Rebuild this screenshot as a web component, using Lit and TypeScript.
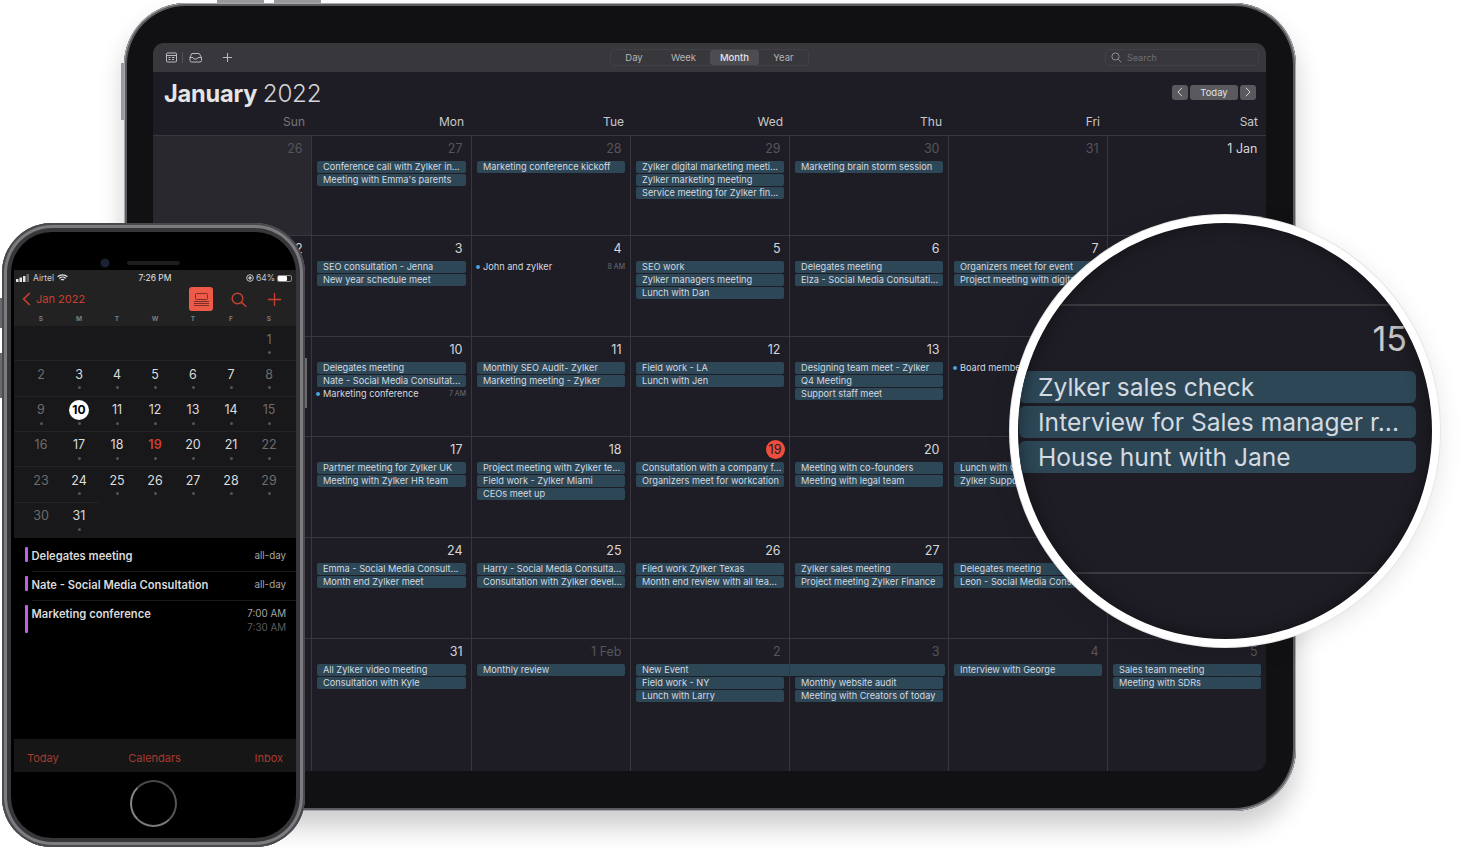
import { LitElement, html, css, svg } from 'lit';
import { customElement } from 'lit/decorators.js';

type Ev = string | { dot: string; time?: string } | { span: string } | { gap: true };
type Cell = { d: string; dim?: boolean; shade?: boolean; today?: boolean; ev?: Ev[] };

// dates that sit fully under the magnifier are left blank
const WEEK: Cell[][] = [
  [
    { d: '26', dim: true, shade: true },
    { d: '27', dim: true, ev: ['Conference call with Zylker in...', "Meeting with Emma's parents"] },
    { d: '28', dim: true, ev: ['Marketing conference kickoff'] },
    { d: '29', dim: true, ev: ['Zylker digital marketing meeti...', 'Zylker marketing meeting', 'Service meeting for Zylker fin...'] },
    { d: '30', dim: true, ev: ['Marketing brain storm session'] },
    { d: '31', dim: true },
    { d: '1 Jan' },
  ],
  [
    { d: '2' },
    { d: '3', ev: ['SEO consultation - Jenna', 'New year schedule meet'] },
    { d: '4', ev: [{ dot: 'John and zylker', time: '8 AM' }] },
    { d: '5', ev: ['SEO work', 'Zylker managers meeting', 'Lunch with Dan'] },
    { d: '6', ev: ['Delegates meeting', 'Elza - Social Media Consultati...'] },
    { d: '7', ev: ['Organizers meet for event', 'Project meeting with digital...'] },
    { d: '' },
  ],
  [
    { d: '9' },
    { d: '10', ev: ['Delegates meeting', 'Nate - Social Media Consultat...', { dot: 'Marketing conference', time: '7 AM' }] },
    { d: '11', ev: ['Monthly SEO Audit- Zylker', 'Marketing meeting - Zylker'] },
    { d: '12', ev: ['Field work - LA', 'Lunch with Jen'] },
    { d: '13', ev: ['Designing team meet - Zylker', 'Q4 Meeting', 'Support staff meet'] },
    { d: '', ev: [{ dot: 'Board members meeting' }] },
    { d: '' },
  ],
  [
    { d: '16' },
    { d: '17', ev: ['Partner meeting for Zylker UK', 'Meeting with Zylker HR team'] },
    { d: '18', ev: ['Project meeting with Zylker te...', 'Field work - Zylker Miami', 'CEOs meet up'] },
    { d: '19', today: true, ev: ['Consultation with a company f...', 'Organizers meet for workcation'] },
    { d: '20', ev: ['Meeting with co-founders', 'Meeting with legal team'] },
    { d: '', ev: ['Lunch with George', 'Zylker Support team'] },
    { d: '' },
  ],
  [
    { d: '23' },
    { d: '24', ev: ['Emma - Social Media Consult...', 'Month end Zylker meet'] },
    { d: '25', ev: ['Harry - Social Media Consulta...', 'Consultation with Zylker devel...'] },
    { d: '26', ev: ['Filed work Zylker Texas', 'Month end review with all tea...'] },
    { d: '27', ev: ['Zylker sales meeting', 'Project meeting Zylker Finance'] },
    { d: '', ev: ['Delegates meeting', 'Leon - Social Media Consult...'] },
    { d: '' },
  ],
  [
    { d: '30' },
    { d: '31', ev: ['All Zylker video meeting', 'Consultation with Kyle'] },
    { d: '1 Feb', dim: true, ev: ['Monthly review'] },
    { d: '2', dim: true, ev: [{ span: 'New Event' }, 'Field work - NY', 'Lunch with Larry'] },
    { d: '3', dim: true, ev: [{ gap: true }, 'Monthly website audit', 'Meeting with Creators of today'] },
    { d: '4', dim: true, ev: ['Interview with George'] },
    { d: '5', dim: true, ev: ['Sales team meeting', 'Meeting with SDRs'] },
  ],
];

const WEEKDAYS = ['Sun', 'Mon', 'Tue', 'Wed', 'Thu', 'Fri', 'Sat'];
const MINI_HEAD = ['S', 'M', 'T', 'W', 'T', 'F', 'S'];
// days without a dot under them in the phone month view
const NO_DOT = [2, 16, 23, 30];

const red = '#c8402f';

const icons = {
  calendar: svg`<svg width="11" height="11" viewBox="0 0 11 11" fill="none" stroke="#b9b9bc" stroke-width="1"><rect x=".5" y="1" width="10" height="9" rx="1"/><path d="M.5 3.5h10M2.5 5.5h2M6 5.5h2.5M2.5 7.5h2M6 7.5h2"/></svg>`,
  inbox: svg`<svg width="13" height="11" viewBox="0 0 13 11" fill="none" stroke="#b9b9bc" stroke-width="1"><path d="M2.8 1.5h7.4l2.3 4v3a1.5 1.5 0 0 1-1.5 1.5h-8.500a1.5 1.5 0 0 1-1.5-1.5v-3z"/><path d="M.7 5.5h3.3l1 1.5h3l1-1.5h3.3"/></svg>`,
  plus: svg`<svg width="9" height="9" viewBox="0 0 9 9" stroke="#b9b9bc" stroke-width="1"><path d="M4.5 0v9M0 4.5h9"/></svg>`,
  search: svg`<svg width="11" height="11" viewBox="0 0 11 11" fill="none" stroke="#8d8d91" stroke-width="1"><circle cx="4.5" cy="4.5" r="3.6"/><path d="M7.2 7.2l3.2 3.2"/></svg>`,
  prev: svg`<svg width="6" height="10" viewBox="0 0 6 10" fill="none" stroke="#d6d6d8" stroke-width="1"><path d="M5 .8L1 5l4 4.2"/></svg>`,
  next: svg`<svg width="6" height="10" viewBox="0 0 6 10" fill="none" stroke="#d6d6d8" stroke-width="1"><path d="M1 .8L5 5 1 9.2"/></svg>`,
  signal: svg`<svg width="14" height="8" viewBox="0 0 14 8"><rect x="0" y="5" width="2.5" height="3" fill="#e4e4e4"/><rect x="3.5" y="3.5" width="2.5" height="4.5" fill="#e4e4e4"/><rect x="7" y="2" width="2.5" height="6" fill="#e4e4e4"/><rect x="10.5" y="0" width="2.5" height="8" fill="#666"/></svg>`,
  wifi: svg`<svg width="11" height="8" viewBox="0 0 11 8" fill="none" stroke="#e4e4e4" stroke-width="1.2"><path d="M.6 2.8a7 7 0 0 1 9.8 0M2.3 4.5a4.6 4.6 0 0 1 6.4 0M3.9 6.1a2.3 2.3 0 0 1 3.2 0"/></svg>`,
  lock: svg`<svg width="8" height="8" viewBox="0 0 8 8" fill="none" stroke="#c4c4c4" stroke-width="1"><circle cx="4" cy="4" r="3.3"/><circle cx="4" cy="4" r="1.2" fill="#c4c4c4"/></svg>`,
  back: svg`<svg width="9" height="14" viewBox="0 0 9 14" fill="none" stroke="${red}" stroke-width="1.7"><path d="M7.8 1L1.6 7l6.2 6"/></svg>`,
  list: svg`<svg width="15" height="13" viewBox="0 0 15 13" fill="none" stroke="#7e3026" stroke-width="1"><rect x="1.5" y=".5" width="12" height="6" rx="1"/><path d="M0 8.5h15M0 10.5h15M0 12.5h15"/></svg>`,
  find: svg`<svg width="16" height="16" viewBox="0 0 16 16" fill="none" stroke="${red}" stroke-width="1.4"><circle cx="6.5" cy="6.5" r="5.3"/><path d="M10.4 10.4l5 4.4"/></svg>`,
  add: svg`<svg width="13" height="13" viewBox="0 0 13 13" stroke="${red}" stroke-width="1.3"><path d="M6.5 0v13M0 6.5h13"/></svg>`,
};

@customElement('app-root')
export class AppRoot extends LitElement {
  static styles = css`
    :host {
      display: block;
      position: relative;
      width: 1479px;
      height: 848px;
      overflow: hidden;
      background: #fff;
      font-family: Inter, "Liberation Sans", sans-serif;
    }

    /* tablet */
    .tablet {
      position: absolute;
      left: 124px;
      top: 3px;
      width: 1172px;
      height: 808px;
      box-sizing: border-box;
      padding: 40px 30px 40px 29px;
      border-radius: 62px;
      background: #111113;
      box-shadow: inset 0 0 0 1px #a8a8ac, inset 0 0 0 3px #5c5c60, 0 16px 26px rgba(0, 0, 0, .2);
    }
    .hw { position: absolute; background: #9a9a9e; }
    .hw.vol1 { left: 93px; top: -3px; width: 47px; height: 3px; }
    .hw.vol2 { left: 150px; top: -3px; width: 47px; height: 3px; }
    .hw.side { left: -3px; top: 60px; width: 3px; height: 57px; }
    .screen {
      display: flex;
      flex-direction: column;
      height: 728px;
      border-radius: 11px;
      overflow: hidden;
      background: #1e1d25;
    }
    .toolbar {
      display: flex;
      align-items: center;
      position: relative;
      flex: none;
      height: 29px;
      padding: 0 7px 0 13px;
      background: #38373c;
      color: #b4b4b7;
    }
    .toolbar .tool { display: flex; align-items: center; }
    .toolbar .sep { width: 1px; height: 11px; margin: 0 6px 0 5px; background: #515156; }
    .toolbar .plus { margin-left: 21px; }
    .segments {
      display: flex;
      align-items: center;
      margin-left: 378px;
      width: 199px;
      height: 17px;
      box-sizing: border-box;
      border: 1px solid #414146;
      border-radius: 4px;
      font-size: 9.5px;
    }
    .segments span { text-align: center; line-height: 15px; }
    .segments .on { background: #4d4c51; border-radius: 3px; color: #e2e2e4; font-weight: 500; }
    .searchbox {
      display: flex;
      align-items: center;
      gap: 5px;
      box-sizing: border-box;
      margin-left: auto;
      width: 154px;
      height: 17px;
      padding-left: 5px;
      border: 1px solid #414146;
      border-radius: 4px;
      font-size: 9px;
      color: #6f6f74;
    }
    .titlebar {
      display: flex;
      align-items: center;
      justify-content: space-between;
      flex: none;
      height: 42px;
      padding: 0 10px 0 11px;
      color: #e4e4e6;
    }
    .title { font-size: 23.6px; letter-spacing: -.2px; font-weight: 700; }
    .title span { font-size: 24.2px; font-weight: 300; color: #d4d4d6; }
    .nav { display: flex; align-items: center; gap: 2px; margin-top: -2px; }
    .nav div {
      display: flex;
      align-items: center;
      justify-content: center;
      height: 15px;
      width: 16px;
      border-radius: 3px;
      background: #5a595e;
      font-size: 9.5px;
      color: #e4e4e6;
    }
    .nav .today { width: 48px; }
    .daynames { display: grid; grid-template-columns: 158px 160px 159px 159px 159px 159px 159px; flex: none; height: 21px; }
    .daynames div { text-align: right; padding-right: 6px; font-size: 12px; line-height: 16px; color: #c8c8ca; }
    .daynames div:first-child { color: #77777b; }
    .daynames div:nth-child(2) { padding-right: 7px; }
    .daynames div:nth-child(6) { padding-right: 7px; }
    .daynames div:nth-child(7) { padding-right: 8px; }
    .grid {
      display: grid;
      grid-template-columns: 158px 160px 159px 159px 159px 159px 159px;
      grid-template-rows: 100px 101px 100px 101px 101px 133px;
      flex: 1;
    }
    .cell {
      position: relative;
      box-sizing: border-box;
      min-width: 0;
      border-top: 1px solid #38373d;
      border-left: 1px solid #38373d;
    }
    .cell:nth-child(7n + 1) { border-left: 0; }
    .cell.shade { background: #29282e; }
    .date {
      display: flex;
      justify-content: flex-end;
      align-items: center;
      box-sizing: border-box;
      height: 25px;
      padding: 0 8.5px 1px 0;
      font-size: 12.5px;
      color: #d6d6d8;
    }
    .date.dim { color: #56555b; }
    .date.today span {
      display: flex;
      align-items: center;
      justify-content: center;
      width: 19px;
      height: 19px;
      margin: 1px -4px 0 0;
      border-radius: 50%;
      background: #ef4d3d;
      color: #1b1b1b;
    }
    .ev {
      box-sizing: border-box;
      height: 12px;
      margin: 0 5px 1px 5px;
      padding-left: 6px;
      border-radius: 2px;
      background: #2d4757;
      font-size: 9.2px;
      line-height: 11px;
      color: #d3dae0;
      white-space: nowrap;
      overflow: hidden;
    }
    .ev.span { position: relative; width: 309px; }
    .ev.gap { background: none; }
    .dotev {
      display: flex;
      align-items: center;
      height: 11px;
      margin: 0 5px 2px 5px;
      font-size: 9.2px;
      line-height: 11px;
      color: #d3dae0;
      white-space: nowrap;
    }
    .dotev i { width: 4px; height: 4px; margin: 0 3px 0 -1px; flex: none; border-radius: 50%; background: #4da3dc; }
    .dotev b { margin-left: auto; font-size: 7px; font-weight: 400; color: #6f6f74; }

    /* phone */
    .phone {
      position: absolute;
      left: 2px;
      top: 223px;
      width: 303px;
      height: 624px;
      box-sizing: border-box;
      display: flex;
      flex-direction: column;
      padding: 10px 9px 10px 12px;
      border-radius: 50px;
      background: #000;
      box-shadow: inset 0 0 0 2px #4a4a4d, inset 0 0 0 5px #7c7c80, inset 0 0 0 9px #37373a;
    }
    .phone-btn { position: absolute; background: #6a6a6e; }
    .phone-btn.a { left: -2px; top: 75px; width: 2px; height: 30px; }
    .phone-btn.b { left: -2px; top: 130px; width: 2px; height: 45px; }
    .phone-btn.c { right: -2px; top: 135px; width: 2px; height: 50px; }
    .notch { flex: none; height: 37px; display: flex; justify-content: center; align-items: flex-end; }
    .camera { width: 8px; height: 8px; margin: 0 18px 3px 0; border-radius: 50%; background: #1a2336; box-shadow: 0 0 0 1px #101010; }
    .speaker { width: 53px; height: 4px; margin: 0 29px 5px 0; border-radius: 2px; background: #1d1d1f; }
    .pscreen { flex: none; height: 502px; display: flex; flex-direction: column; }
    .phead { flex: none; height: 56px; background: #222223; }
    .status {
      display: flex;
      align-items: center;
      position: relative;
      height: 16px;
      padding: 0 4px 0 2px;
      font-size: 8.5px;
      color: #c8c8c8;
    }
    .status .carrier { margin: 0 3px; }
    .status .clock { position: absolute; left: 0; right: 0; text-align: center; color: #e4e4e4; }
    .status .right { margin-left: auto; display: flex; align-items: center; gap: 2px; }
    .battery {
      display: block;
      width: 15px;
      height: 7px;
      box-sizing: border-box;
      border: 1px solid #8c8c8c;
      border-radius: 2px;
    }
    .battery i { display: block; width: 9px; height: 5px; background: #fff; border-radius: 1px; }
    .pnav {
      display: flex;
      align-items: center;
      height: 26px;
      padding: 0 15px 0 8px;
      color: #c8402f;
      font-size: 11px;
    }
    .pnav .month { margin-left: 5px; }
    .listbtn {
      display: flex;
      align-items: center;
      justify-content: center;
      width: 24px;
      height: 24px;
      margin-left: auto;
      border-radius: 3px;
      background: #ee5a48;
    }
    .pnav .find { margin: 2px 0 0 18px; display: flex; }
    .pnav .add { margin-left: 21px; display: flex; }
    .phead-days { display: grid; grid-template-columns: repeat(7, 38px); padding: 0 8px; height: 14px; }
    .phead-days span { text-align: center; font-size: 6.5px; line-height: 14px; font-weight: 700; color: #7d7d7d; }
    .mini {
      flex: none;
      display: grid;
      grid-template-columns: repeat(7, 38px);
      grid-auto-rows: 35.33px;
      height: 212px;
      padding: 0 8px;
      box-sizing: border-box;
      background: #18181a;
    }
    .mini-cell { position: relative; display: flex; flex-direction: column; align-items: center; }
    /* hairline above each week, running out to the screen edge on the outer columns */
    .mini-cell::before { content: ""; position: absolute; top: -1px; left: 0; right: 0; height: 1px; background: #242426; }
    .mini-cell:nth-child(7n + 1)::before { left: -8px; }
    .mini-cell:nth-child(7n)::before { right: -8px; }
    .mini-cell.noline::before { display: none; }
    .mini-cell span {
      display: flex;
      align-items: center;
      justify-content: center;
      width: 20px;
      height: 20px;
      margin-top: 3px;
      font-size: 12.5px;
      color: #dcdcdc;
    }
    .mini-cell.off span { color: #6c6c6e; }
    .mini-cell.red span { color: #d33c2d; font-weight: 600; }
    .mini-cell.sel span { background: #fff; border-radius: 50%; color: #000; font-weight: 700; font-size: 12px; }
    .mini-cell i { width: 3px; height: 3px; margin-top: 2px; border-radius: 50%; background: #545456; }
    .agenda { flex: 1; background: #000; padding: 5px 0 0 11px; }
    .agenda-row { display: flex; }
    .agenda-row i { flex: none; width: 2.5px; height: 15px; margin: 4px 4px 0 0; border-radius: 1px; background: #bd62e6; }
    .agenda-row.tall i { height: 28px; margin-top: 4px; }
    .agenda-body {
      flex: 1;
      display: flex;
      justify-content: space-between;
      height: 29px;
      box-sizing: border-box;
      padding: 5.5px 10px 0 0;
      border-bottom: 1px solid #1a1a1c;
      font-size: 11.2px;
      font-weight: 600;
      line-height: 15px;
      color: #dadada;
    }
    .agenda-row.tall .agenda-body { border: 0; height: 46px; }
    .agenda-body small { font-size: 9.8px; font-weight: 400; color: #a6a6a6; text-align: right; line-height: 14.5px; }
    .agenda-body small em { display: block; font-style: normal; color: #5c5c5e; }
    .ptabs {
      flex: none;
      display: flex;
      align-items: center;
      justify-content: space-between;
      height: 33px;
      padding: 4px 13px 0 13px;
      box-sizing: border-box;
      background: #161617;
      font-size: 11px;
      color: #a93a2e;
    }
    .ptabs .mid { margin-right: 4px; }
    .home { flex: 1; display: flex; align-items: center; justify-content: center; }
    .home div {
      width: 43px;
      height: 43px;
      margin: 0 0 2px -4px;
      border-radius: 50%;
      border: 2px solid;
      border-color: #47474b #55555a #7a7a7e #85858a;
    }

    /* magnifier */
    .lens {
      position: absolute;
      left: 1010px;
      top: 215px;
      width: 430px;
      height: 432px;
      box-sizing: border-box;
      padding-top: 81px;
      border: 8px solid #fff;
      border-radius: 50%;
      background: #1e1d25;
      overflow: hidden;
      box-shadow: 0 0 0 1px #e6e6e6, 0 6px 24px rgba(0, 0, 0, .1);
    }
    .lens::after {
      content: "";
      position: absolute;
      inset: 0;
      border-radius: 50%;
      box-shadow: inset 0 0 18px rgba(0, 0, 0, .45);
    }
    .lens-cell {
      box-sizing: border-box;
      height: 270px;
      padding: 0 16px 0 1px;
      border-top: 2px solid #3a3a3f;
      border-bottom: 2px solid #3a3a3f;
    }
    .lens-date { height: 65px; padding-right: 9px; text-align: right; font-size: 34px; line-height: 66px; color: #c9c9cb; }
    .lens-ev {
      height: 32px;
      margin-bottom: 3px;
      padding-left: 19px;
      border-radius: 6px;
      background: #2d4757;
      font-size: 24.6px;
      line-height: 32px;
      color: #d3dae0;
      white-space: nowrap;
    }
  `;

  renderEvent(e: Ev) {
    if (typeof e === 'string') return html`<div class="ev">${e}</div>`;
    if ('span' in e) return html`<div class="ev span">${e.span}</div>`;
    if ('gap' in e) return html`<div class="ev gap"></div>`;
    return html`<div class="dotev"><i></i>${e.dot}${e.time ? html`<b>${e.time}</b>` : ''}</div>`;
  }

  renderTablet() {
    return html`
      <div class="tablet">
        <div class="hw vol1"></div>
        <div class="hw vol2"></div>
        <div class="hw side"></div>
        <div class="screen">
          <div class="toolbar">
            <span class="tool">${icons.calendar}</span>
            <span class="sep"></span>
            <span class="tool">${icons.inbox}</span>
            <span class="tool plus">${icons.plus}</span>
            <div class="segments">
              <span style="width:46px">Day</span>
              <span style="width:53px">Week</span>
              <span class="on" style="width:49px">Month</span>
              <span style="width:49px">Year</span>
            </div>
            <div class="searchbox">${icons.search}Search</div>
          </div>
          <div class="titlebar">
            <div class="title">January <span>2022</span></div>
            <div class="nav">
              <div>${icons.prev}</div>
              <div class="today">Today</div>
              <div>${icons.next}</div>
            </div>
          </div>
          <div class="daynames">${WEEKDAYS.map((d) => html`<div>${d}</div>`)}</div>
          <div class="grid">
            ${WEEK.flat().map(
              (c) => html`
                <div class="cell ${c.shade ? 'shade' : ''}">
                  <div class="date ${c.dim ? 'dim' : ''} ${c.today ? 'today' : ''}"><span>${c.d}</span></div>
                  ${(c.ev || []).map((e) => this.renderEvent(e))}
                </div>
              `
            )}
          </div>
        </div>
      </div>
    `;
  }

  renderMiniMonth() {
    const cells = [];
    for (let i = 0; i < 6; i++) cells.push(html`<div class="mini-cell noline"></div>`);
    for (let d = 1; d <= 31; d++) {
      const col = (d + 5) % 7;
      const cls = [
        col === 0 || col === 6 ? 'off' : '',
        d === 10 ? 'sel' : '',
        d === 19 ? 'red' : '',
        d === 1 ? 'noline' : '',
      ].join(' ');
      cells.push(html`
        <div class="mini-cell ${cls}">
          <span>${d}</span>
          ${NO_DOT.includes(d) ? '' : html`<i></i>`}
        </div>
      `);
    }
    return cells;
  }

  renderPhone() {
    return html`
      <div class="phone">
        <div class="phone-btn a"></div>
        <div class="phone-btn b"></div>
        <div class="phone-btn c"></div>
        <div class="notch">
          <div class="camera"></div>
          <div class="speaker"></div>
        </div>
        <div class="pscreen">
          <div class="phead">
            <div class="status">
              ${icons.signal}<span class="carrier">Airtel</span>${icons.wifi}
              <span class="clock">7:26 PM</span>
              <span class="right">${icons.lock}<span>64%</span><span class="battery"><i></i></span></span>
            </div>
            <div class="pnav">
              ${icons.back}<span class="month">Jan 2022</span>
              <span class="listbtn">${icons.list}</span>
              <span class="find">${icons.find}</span>
              <span class="add">${icons.add}</span>
            </div>
            <div class="phead-days">${MINI_HEAD.map((d) => html`<span>${d}</span>`)}</div>
          </div>
          <div class="mini">${this.renderMiniMonth()}</div>
          <div class="agenda">
            <div class="agenda-row"><i></i><div class="agenda-body">Delegates meeting<small>all-day</small></div></div>
            <div class="agenda-row"><i></i><div class="agenda-body">Nate - Social Media Consultation<small>all-day</small></div></div>
            <div class="agenda-row tall"><i></i><div class="agenda-body">Marketing conference<small>7:00 AM<em>7:30 AM</em></small></div></div>
          </div>
          <div class="ptabs"><span>Today</span><span class="mid">Calendars</span><span>Inbox</span></div>
        </div>
        <div class="home"><div></div></div>
      </div>
    `;
  }

  renderLens() {
    return html`
      <div class="lens">
        <div class="lens-cell">
          <div class="lens-date">15</div>
          <div class="lens-ev">Zylker sales check</div>
          <div class="lens-ev">Interview for Sales manager r...</div>
          <div class="lens-ev">House hunt with Jane</div>
        </div>
      </div>
    `;
  }

  render() {
    return html`${this.renderTablet()}${this.renderPhone()}${this.renderLens()}`;
  }
}
